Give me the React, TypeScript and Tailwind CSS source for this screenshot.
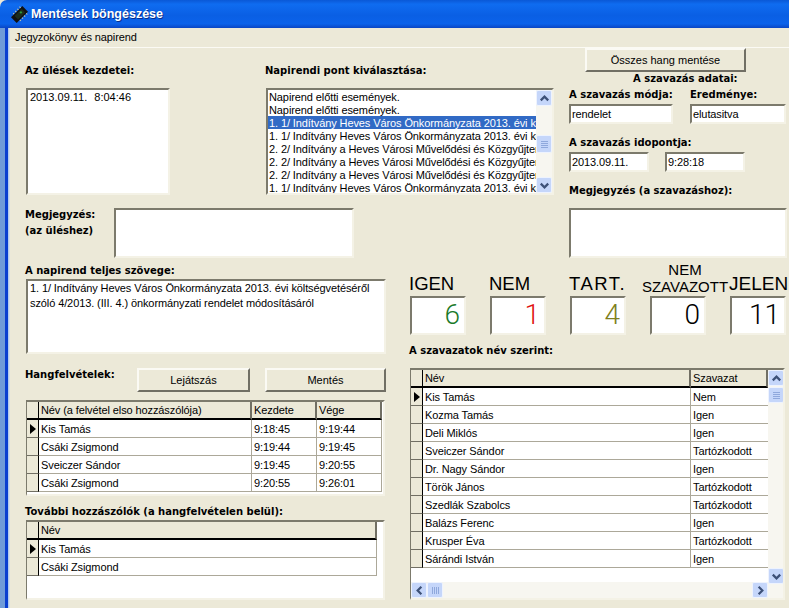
const sans = 'font-["Liberation_Sans",Arial,sans-serif]';

const agenda = [
  'Napirend előtti események.',
  'Napirend előtti események.',
  '1. 1/ Indítvány Heves Város Önkormányzata 2013. évi költségvetéséről',
  '1. 1/ Indítvány Heves Város Önkormányzata 2013. évi költségvetéséről',
  '2. 2/ Indítvány a Heves Városi Művelődési és Közgyűjteményi',
  '2. 2/ Indítvány a Heves Városi Művelődési és Közgyűjteményi',
  '2. 2/ Indítvány a Heves Városi Művelődési és Közgyűjteményi',
  '1. 1/ Indítvány Heves Város Önkormányzata 2013. évi költségvetéséről',
];

const recordings = [
  ['Kis Tamás', '9:18:45', '9:19:44'],
  ['Csáki Zsigmond', '9:19:44', '9:19:45'],
  ['Sveiczer Sándor', '9:19:45', '9:20:55'],
  ['Csáki Zsigmond', '9:20:55', '9:26:01'],
];

const votes = [
  ['Kis Tamás', 'Nem'],
  ['Kozma Tamás', 'Igen'],
  ['Deli Miklós', 'Igen'],
  ['Sveiczer Sándor', 'Tartózkodott'],
  ['Dr. Nagy Sándor', 'Igen'],
  ['Török János', 'Tartózkodott'],
  ['Szedlák Szabolcs', 'Tartózkodott'],
  ['Balázs Ferenc', 'Igen'],
  ['Krusper Éva', 'Tartózkodott'],
  ['Sárándi István', 'Igen'],
];

function Label({ children, className = '' }: { children: React.ReactNode; className?: string }) {
  return (
    <div className={`font-["DejaVu_Sans",sans-serif] text-[10px] font-bold leading-[14px] text-black whitespace-nowrap ${className}`}>
      {children}
    </div>
  );
}

function Sunken({ children, className = '' }: { children?: React.ReactNode; className?: string }) {
  return (
    <div className={`border-2 border-t-[#7c7a6c] border-l-[#7c7a6c] border-r-[#f4f2e6] border-b-[#f4f2e6] bg-white overflow-hidden ${className}`}>
      {children}
    </div>
  );
}

function Field({ value, className = '' }: { value: string; className?: string }) {
  return <Sunken className={`h-[20px] pl-[1px] text-[11px] tracking-[-0.1px] leading-[17px] ${className}`}>{value}</Sunken>;
}

function Button({ label, className = '' }: { label: string; className?: string }) {
  return (
    <div className={`flex items-center justify-center h-[24px] bg-[#ece9d8] border-2 border-t-[#fbfaf4] border-l-[#fbfaf4] border-r-[#716f64] border-b-[#716f64] text-[11px] text-black ${className}`}>
      {label}
    </div>
  );
}

function ScrollButton({ dir, className = '' }: { dir: 'up' | 'down' | 'left' | 'right'; className?: string }) {
  const points = {
    up: '3,9 7,5 11,9',
    down: '3,5 7,9 11,5',
    left: '9,3 5,7 9,11',
    right: '5,3 9,7 5,11',
  }[dir];
  return (
    <div className={`flex h-[16px] w-[16px] shrink-0 items-center justify-center rounded-[2px] border border-[#eef3fe] bg-[#c5d6fa] ${className}`}>
      <svg width="13" height="13" viewBox="0 0 14 14">
        <polyline points={points} fill="none" stroke="#3d5178" strokeWidth="2.4" />
      </svg>
    </div>
  );
}

function Thumb({ className = '', horizontal = false }: { className?: string; horizontal?: boolean }) {
  return (
    <div className={`flex items-center justify-center rounded-[2px] border border-[#eef3fe] bg-[#c5d6fa] ${horizontal ? 'flex-row gap-[1px]' : 'flex-col gap-[1px]'} ${className}`}>
      {[0, 1, 2, 3].map((i) => (
        <div key={i} className={horizontal ? 'h-[7px] w-[1px] bg-[#8fa8dc]' : 'h-[1px] w-[7px] bg-[#8fa8dc]'} />
      ))}
    </div>
  );
}

function Indicator({ active = false, header = false }: { active?: boolean; header?: boolean }) {
  return (
    <div className={`flex w-[12px] shrink-0 items-center justify-center bg-[#ece9d8] border-r border-r-black ${header ? 'border-b-2 border-b-black' : 'border-b border-b-[#716f64]'}`}>
      {active && (
        <svg width="8" height="12" viewBox="0 0 8 12">
          <polygon points="1,1 7,6 1,11" fill="#000" />
        </svg>
      )}
    </div>
  );
}

function HeaderCell({ label, className }: { label: string; className: string }) {
  return (
    <div className={`h-[18px] pl-[2px] bg-[#ece9d8] border-r-2 border-r-[#716f64] border-b-2 border-b-black text-[11px] tracking-[-0.1px] leading-[16px] ${className}`}>
      {label}
    </div>
  );
}

function Cell({ label, className }: { label: string; className: string }) {
  return (
    <div className={`h-[18px] pl-[2px] bg-white border-r border-b border-[#aca899] text-[11px] tracking-[-0.1px] leading-[18px] ${className}`}>
      {label}
    </div>
  );
}

function Counter({ value, color }: { value: string; color: string }) {
  return (
    <Sunken className={`h-[39px] w-[56px] pr-[4px] text-right font-["Roboto",sans-serif] text-[28px] font-light leading-[34px] ${color}`}>
      {value}
    </Sunken>
  );
}

export default function App() {
  return (
    <div className={`relative flex h-[608px] w-[789px] flex-col overflow-hidden bg-[#ece9d8] text-black ${sans}`}>
      {/* Title bar */}
      <div className="flex h-[28px] shrink-0 items-center rounded-tl-[7px] bg-[linear-gradient(to_bottom,#0a58d6_0%,#0f6cf0_15%,#0a5fe4_55%,#0b62ea_85%,#0a46c4_100%)] pl-[11px]">
        <svg width="17" height="17" viewBox="0 0 17 17">
          <g transform="rotate(45 8.5 8.5)">
            <rect x="4.5" y="0.5" width="8" height="16" fill="#111" />
            <rect x="6" y="3" width="5" height="10" fill="#1c2c1c" />
            <path d="M3 3h1.5M3 6h1.5M3 9h1.5M3 12h1.5M12.5 3H14M12.5 6H14M12.5 9H14M12.5 12H14" stroke="#c8c8a8" strokeWidth="1" />
            <rect x="7" y="5" width="2" height="2" fill="#2f9a3d" />
          </g>
        </svg>
        <span className="ml-[3px] text-[12.5px] font-bold text-white [text-shadow:1px_1px_0_#0a2f8c]">
          Mentések böngészése
        </span>
      </div>

      <div className="flex min-h-0 flex-1">
        {/* Window edge */}
        <div className="w-[10px] shrink-0 bg-[linear-gradient(to_right,#6f9bd8_0%,#6f9bd8_45%,#0a3fd0_50%,#0a3fd0_78%,#a9c6ee_82%,#e4e8e4_100%)]" />

        <div className="min-w-0 flex-1">
          {/* Menu */}
          <div className="h-[20px] border-b border-b-[#fbfaf4] pl-[5px] text-[11px] tracking-[-0.1px] leading-[18px]">Jegyzokönyv és napirend</div>

          {/* Upper part */}
          <div className="flex h-[210px] pl-[15px]">
            <div className="w-[544px] shrink-0">
              <div className="flex h-[148px]">
                <div className="w-[241px] shrink-0 pt-[16px]">
                  <Label>Az ülések kezdetei:</Label>
                  <Sunken className="mt-[10px] ml-[1px] h-[107px] w-[144px] pl-[2px] text-[11px] leading-[15px]">
                    <span>2013.09.11.</span>
                    <span className="ml-[7px]">8:04:46</span>
                  </Sunken>
                </div>
                <div className="w-[288px] shrink-0 pt-[16px]">
                  <Label className="-ml-[1px]">Napirendi pont kiválasztása:</Label>
                  <Sunken className="mt-[10px] flex h-[107px]">
                    <div className="min-w-0 flex-1">
                      {agenda.map((item, i) => (
                        <div
                          key={i}
                          className={`h-[13px] overflow-hidden whitespace-nowrap pl-[1px] text-[11px] tracking-[-0.1px] leading-[15px] ${i === 2 ? 'bg-[#316ac5] text-white' : ''}`}
                        >
                          {item}
                        </div>
                      ))}
                    </div>
                    <div className="flex w-[16px] shrink-0 flex-col bg-[#f7f6f0]">
                      <ScrollButton dir="up" />
                      <Thumb className="mt-[29px] h-[18px] w-[16px]" />
                      <ScrollButton dir="down" className="mt-auto" />
                    </div>
                  </Sunken>
                </div>
              </div>
              <div className="flex pt-[12px]">
                <div className="-mt-[1px] w-[89px] shrink-0">
                  <Label className="leading-[16px]">Megjegyzés:</Label>
                  <Label className="leading-[16px]">(az üléshez)</Label>
                </div>
                <Sunken className="h-[50px] w-[240px]" />
              </div>
            </div>

            <div className="flex-1">
              <Button label="Összes hang mentése" className="ml-[16px] w-[161px]" />
              <Label className="ml-[64px]">A szavazás adatai:</Label>
              <div className="flex">
                <div className="w-[121px]">
                  <Label className="mt-[2px]">A szavazás módja:</Label>
                  <Field value="rendelet" className="mt-[2px] w-[104px]" />
                </div>
                <div>
                  <Label className="mt-[2px]">Eredménye:</Label>
                  <Field value="elutasitva" className="mt-[2px] w-[96px]" />
                </div>
              </div>
              <Label className="mt-[12px]">A szavazás idopontja:</Label>
              <div className="mt-[2px] flex gap-[16px]">
                <Field value="2013.09.11." className="w-[80px]" />
                <Field value="9:28:18" className="w-[80px]" />
              </div>
              <Label className="mt-[12px]">Megjegyzés (a szavazáshoz):</Label>
              <Sunken className="mt-[10px] h-[50px] w-[218px]" />
            </div>
          </div>

          {/* Lower part */}
          <div className="flex pl-[15px]">
            <div className="w-[361px] shrink-0">
              <Label className="mt-[6px]">A napirend teljes szövege:</Label>
              <Sunken className="mt-[1px] ml-[1px] h-[75px] w-[360px] pl-[2px] text-[11px] tracking-[-0.1px] leading-[15px]">
                <div>1. 1/ Indítvány Heves Város Önkormányzata 2013. évi költségvetéséről</div>
                <div>szóló 4/2013. (III. 4.) önkormányzati rendelet módosításáról</div>
              </Sunken>
              <div className="mt-[14px] flex h-[24px]">
                <Label className="w-[112px]">Hangfelvételek:</Label>
                <Button label="Lejátszás" className="w-[113px]" />
                <Button label="Mentés" className="ml-[15px] w-[121px]" />
              </div>

              <Sunken className="mt-[8px] ml-[1px] h-[96px] w-[359px] !border-l-[1px] bg-[#ece9d8]">
                <div className="flex">
                  <Indicator header />
                  <HeaderCell label="Név (a felvétel elso hozzászólója)" className="w-[213px]" />
                  <HeaderCell label="Kezdete" className="w-[65px]" />
                  <HeaderCell label="Vége" className="w-[65px]" />
                </div>
                {recordings.map((row, i) => (
                  <div key={i} className="flex">
                    <Indicator active={i === 0} />
                    <Cell label={row[0]} className="w-[213px]" />
                    <Cell label={row[1]} className="w-[65px]" />
                    <Cell label={row[2]} className="w-[65px]" />
                  </div>
                ))}
              </Sunken>

              <Label className="mt-[9px]">További hozzászólók (a hangfelvételen belül):</Label>
              <Sunken className="mt-[1px] ml-[1px] h-[80px] w-[359px] !border-l-[1px]">
                <div className="flex">
                  <Indicator header />
                  <HeaderCell label="Név" className="w-[338px]" />
                </div>
                {['Kis Tamás', 'Csáki Zsigmond'].map((name, i) => (
                  <div key={i} className="flex">
                    <Indicator active={i === 0} />
                    <Cell label={name} className="w-[338px]" />
                  </div>
                ))}
              </Sunken>
            </div>

            <div className="ml-[23px] flex-1">
              <div className="flex h-[38px] items-end whitespace-nowrap">
                <div className="w-[80px] text-[18.5px] leading-[24px]">IGEN</div>
                <div className="w-[80px] text-[18.5px] leading-[24px]">NEM</div>
                <div className="w-[72px] text-[18.5px] tracking-[1.5px] leading-[24px]">TART.</div>
                <div className="w-[88px] pb-[1px] text-center text-[15px] leading-[17px]">
                  <div>NEM</div>
                  <div>SZAVAZOTT</div>
                </div>
                <div className="text-[19px] leading-[24px]">JELEN</div>
              </div>
              <div className="ml-[1px] flex gap-[24px]">
                <Counter value="6" color="text-[#1c7a2a]" />
                <Counter value="1" color="text-[#e01010]" />
                <Counter value="4" color="text-[#80801c]" />
                <Counter value="0" color="text-black" />
                <Counter value="11" color="text-black" />
              </div>
              <Label className="mt-[9px]">A szavazatok név szerint:</Label>
              <Sunken className="ml-[1px] mt-[10px] flex h-[232px] w-[375px] !border-l-[1px] bg-[#ece9d8]">
                <div className="flex w-[357px] shrink-0 flex-col">
                  <div className="flex">
                    <Indicator header />
                    <HeaderCell label="Név" className="w-[268px]" />
                    <HeaderCell label="Szavazat" className="w-[77px] border-r-0" />
                  </div>
                  {votes.map((row, i) => (
                    <div key={i} className="flex">
                      <Indicator active={i === 0} />
                      <Cell label={row[0]} className="w-[268px]" />
                      <Cell label={row[1]} className="w-[77px] border-r-0" />
                    </div>
                  ))}
                  <div className="h-[14px] bg-white" />
                  <div className="flex h-[16px] items-center bg-[#f7f6f0]">
                    <ScrollButton dir="left" />
                    <Thumb horizontal className="h-[16px] w-[16px]" />
                    <div className="flex-1" />
                    <ScrollButton dir="right" />
                  </div>
                </div>
                <div className="flex w-[16px] shrink-0 flex-col bg-[#f7f6f0]">
                  <ScrollButton dir="up" />
                  <Thumb className="mt-[1px] h-[16px] w-[16px]" />
                  <ScrollButton dir="down" className="mt-[165px]" />
                </div>
              </Sunken>
            </div>
          </div>
        </div>
      </div>
    </div>
  );
}
